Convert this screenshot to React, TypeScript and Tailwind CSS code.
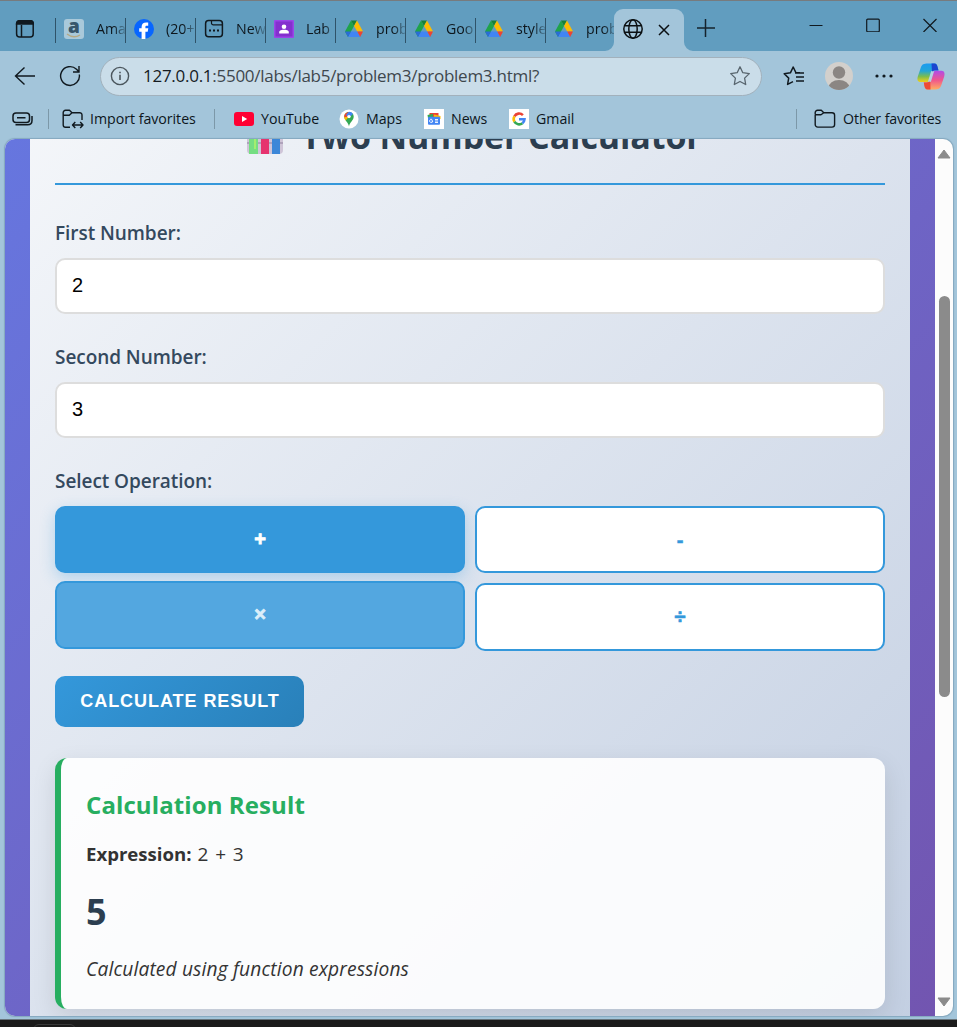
import React from "react";

const Drive = () => (
  <svg width="20" height="18" viewBox="0 0 20 18">
    <path d="M7 0.5 L1 11.5 L4 17 L10 6Z" fill="#1fa34a" />
    <path d="M7 0.5H13L10 6Z" fill="#188038" />
    <path d="M13 0.5 L19 11.5 H13.2 L10 6Z" fill="#fbbc04" />
    <path d="M4 17 L7 11.5H13.2L16.2 17Z" fill="#4285f4" />
    <path d="M1 11.5H7L4 17Z" fill="#2a6bd8" />
    <path d="M19 11.5H13.2L16.2 17Z" fill="#ea4335" />
  </svg>
);

const Amazon = () => (
  <svg width="20" height="20" viewBox="0 0 20 20">
    <rect width="20" height="20" rx="3" fill="#a9c9da" />
    <text x="10" y="14" textAnchor="middle" fontSize="19" fontWeight="800" fill="#37566b" fontFamily="Open Sans, sans-serif">a</text>
    <path d="M3 15 Q9.5 20 16 16" fill="none" stroke="#b6a983" strokeWidth="1.4" />
  </svg>
);

const Facebook = () => (
  <svg width="20" height="20" viewBox="0 0 20 20">
    <circle cx="10" cy="10" r="10" fill="#0866ff" />
    <path d="M7.6 20V12.7H5.2V9.3H7.6V8C7.6 4.8 9.4 3.4 12.2 3.4C13 3.4 13.8 3.5 14.2 3.6V6.7H12.8C11.7 6.7 11.4 7.2 11.4 8.1V9.3H14.3L13.7 12.7H11.4V20Z" fill="#fff" />
  </svg>
);

const NewTab = () => (
  <svg width="20" height="20" viewBox="0 0 20 20" fill="none" stroke="#10191f" strokeWidth="1.5">
    <rect x="1.6" y="1.6" width="16.8" height="16.2" rx="3" />
    <path d="M7.5 2V4A1.6 1.6 0 0 0 9 5.8H18" strokeWidth="1.2" />
    <path d="M5 11.5H7M9 11.5H11M13 11.5H15" strokeWidth="2" />
  </svg>
);

const Classroom = () => (
  <svg width="20" height="18" viewBox="0 0 20 18">
    <rect width="20" height="18" rx="1" fill="#9b45e8" />
    <rect x="1.5" y="1.5" width="17" height="15" fill="#8430ce" />
    <circle cx="10" cy="6.7" r="2.3" fill="#fff" />
    <path d="M5.2 13.5V12C5.2 10.4 8 9.8 10 9.8S14.8 10.4 14.8 12V13.5Z" fill="#fff" />
  </svg>
);

const tabs = [
  { icon: <Amazon />, title: "Ama" },
  { icon: <Facebook />, title: "(20+" },
  { icon: <NewTab />, title: "New" },
  { icon: <Classroom />, title: "Lab" },
  { icon: <Drive />, title: "prob" },
  { icon: <Drive />, title: "Goo" },
  { icon: <Drive />, title: "style" },
  { icon: <Drive />, title: "prob" },
];

function TabStrip() {
  return (
    <div className="flex h-[51px] border-t border-[#777b7e] bg-[#619dbf]">
      <div className="flex w-[55px] shrink-0 pt-[18px] pl-[15px]">
        <svg width="20" height="20" viewBox="0 0 20 20" fill="none" stroke="#10191f" strokeWidth="1.5">
          <rect x="1.6" y="1.8" width="16.6" height="16.2" rx="3" />
          <path d="M1.6 5V4.5A2.5 2.5 0 0 1 4.2 1.8H15.6A2.5 2.5 0 0 1 18.2 4.5V5H1.6Z" fill="#10191f" />
          <path d="M6.5 6V18" />
        </svg>
      </div>
      {tabs.map((t, i) => (
        <div key={i} className="flex w-[70px] shrink-0 pt-[17px]">
          <div className="h-[25px] w-px shrink-0 bg-[#2f5369]" />
          <div className="ml-2 flex h-[22px] w-5 shrink-0 items-center justify-center">{t.icon}</div>
          <div className="ml-[12px] h-6 w-[29px] overflow-hidden bg-linear-to-r from-[#0d161c] from-60% to-[#0d161c]/20 bg-clip-text text-[14.2px] leading-[22px] whitespace-nowrap text-transparent">
            {t.title}
          </div>
        </div>
      ))}
      <div className="relative -ml-px mt-2 flex h-[42px] w-[70px] shrink-0 items-center rounded-t-[9px] bg-[#a3c5da]">
        <svg className="absolute bottom-0 -left-[9px]" width="9" height="9"><path d="M9 0A9 9 0 0 1 0 9H9Z" fill="#a3c5da" /></svg>
        <svg className="absolute -right-[9px] bottom-0" width="9" height="9"><path d="M0 0A9 9 0 0 0 9 9H0Z" fill="#a3c5da" /></svg>
        <svg className="ml-2 -mt-0.5" width="22" height="22" viewBox="0 0 22 22" fill="none" stroke="#0b1013" strokeWidth="1.5">
          <circle cx="11" cy="11" r="9.2" />
          <ellipse cx="11" cy="11" rx="4.2" ry="9.2" />
          <path d="M2.6 7.7H19.4M2.6 14.3H19.4" />
        </svg>
        <svg className="ml-[14px]" width="12" height="12" viewBox="0 0 12 12" stroke="#0b1013" strokeWidth="1.5"><path d="M1 1L11 11M11 1L1 11" /></svg>
      </div>
      <svg className="mt-[18px] ml-[13px] shrink-0" width="18" height="18" viewBox="0 0 18 18" stroke="#15232c" strokeWidth="1.5"><path d="M8.5 0V18M0 9H18" /></svg>
      <div className="ml-auto flex shrink-0 gap-[43px] pt-[17px] pr-[20.5px]">
        <svg width="14" height="14" viewBox="0 0 14 14" stroke="#10191f"><path d="M.5 7.5H13.5" /></svg>
        <svg width="14" height="14" viewBox="0 0 14 14" fill="none" stroke="#10191f" strokeWidth="1.2"><rect x=".7" y="1.2" width="12.6" height="12.6" rx="1" /></svg>
        <svg width="14" height="14" viewBox="0 0 14 14" stroke="#10191f" strokeWidth="1.2"><path d="M.5 1L13.5 14M13.5 1L.5 14" /></svg>
      </div>
    </div>
  );
}

const star = "M11 1.8L13.8 7.7L20.3 8.6L15.6 13.1L16.7 19.5L11 16.5L5.3 19.5L6.4 13.1L1.7 8.6L8.2 7.7Z";

function AddressBar() {
  return (
    <div className="flex h-[50px] items-center">
      <svg className="ml-[14px] shrink-0" width="22" height="20" viewBox="0 0 22 20" fill="none" stroke="#10191f" strokeWidth="1.4"><path d="M21 10H1.5M10.5 1.5L1.5 10L10.5 18.5" /></svg>
      <svg className="ml-[23px] shrink-0" width="22" height="22" viewBox="0 0 22 22" fill="none" stroke="#10191f" strokeWidth="1.4"><path d="M20.3 9.5A9.4 9.4 0 1 1 17.5 4.2L20 6.8M20 1V7H14" /></svg>
      <div className="ml-[19px] flex h-[39px] w-[662px] shrink-0 items-center rounded-full border border-[#a2b1bc] bg-[#cadde9]">
        <svg className="ml-[9px] shrink-0" width="20" height="20" viewBox="0 0 20 20" fill="none" stroke="#4b565d" strokeWidth="1.4"><circle cx="10" cy="10" r="8.6" /><path d="M10 8.7V14M10 5.7V7.2" strokeWidth="1.6" /></svg>
        <div className="ml-[13px] text-[17px] tracking-[-0.27px] whitespace-nowrap text-[#3e474d]"><span className="text-[#151b1f]">127.0.0.1</span>:5500/labs/lab5/problem3/problem3.html?</div>
        <svg className="mr-[10px] ml-auto shrink-0" width="22" height="22" viewBox="0 0 22 22" fill="none" stroke="#58656e" strokeWidth="1.3" strokeLinejoin="round"><path d={star} /></svg>
      </div>
      <svg className="ml-[21px] shrink-0" width="22" height="22" viewBox="0 0 22 22" fill="none" stroke="#10191f" strokeWidth="1.5" strokeLinejoin="round"><path d="M17 7.8H13L10.2 2L7.4 7.8L1.2 8.8L5.7 13.1L4.6 19.4L10 16.7M12 8H21M13 12H21M13 16H21" /></svg>
      <svg className="ml-[20px] shrink-0" width="28" height="28" viewBox="0 0 28 28">
        <clipPath id="av"><circle cx="14" cy="14" r="14" /></clipPath>
        <g clipPath="url(#av)"><rect width="28" height="28" fill="#d3d0cc" /><circle cx="14" cy="10.5" r="6.2" fill="#8b8683" /><ellipse cx="14" cy="26" rx="10.5" ry="8" fill="#8b8683" /></g>
      </svg>
      <svg className="ml-[22px] shrink-0" width="18" height="4" viewBox="0 0 18 4" fill="#10191f"><circle cx="2" cy="2" r="1.6" /><circle cx="9" cy="2" r="1.6" /><circle cx="16" cy="2" r="1.6" /></svg>
      <svg className="ml-[24px] shrink-0" width="28" height="27" viewBox="0 0 28 27">
        <defs>
          <linearGradient id="c1" x1="0" y1="0" x2="0" y2="1"><stop offset="0" stopColor="#1c9bf0" /><stop offset=".4" stopColor="#22a6d8" /><stop offset=".7" stopColor="#7dbd4e" /><stop offset="1" stopColor="#f6d016" /></linearGradient>
          <linearGradient id="c2" x1="0" y1="0" x2="0" y2="1"><stop offset="0" stopColor="#b14be8" /><stop offset=".5" stopColor="#f0568c" /><stop offset="1" stopColor="#ffae62" /></linearGradient>
        </defs>
        <path d="M11 0.5H17.5C19.5 .5 20 2 20.6 4L21.5 7.5H18C15 7.5 14.5 9 13.8 11.5L12 17C11.2 19 10 19.5 8 19H3.5C.5 19 0 16.5 .8 13.5L4 4C5 1.5 6.5 .5 11 .5Z" fill="url(#c1)" />
        <path d="M14.5 .5H17.5C19.5 .5 20 2 20.6 4L21.5 7.5H18C16.5 7.5 15.6 8 15 9Z" fill="#1d45cf" />
        <path d="M17 26.5H10.5C8.5 26.5 8 25 7.4 23L6.8 19.4H9.5C12.5 19.4 13.5 18 14.2 15.5L16 10C16.8 8 18 7.6 20 7.8H24.5C27.5 8 28 10.5 27.2 13.5L24 23C23 25.5 21.5 26.5 17 26.5Z" fill="url(#c2)" />
        <path d="M13.5 26.5H10.5C8.5 26.5 8 25 7.4 23L6.8 19.4H9.5C11.5 19.4 12.5 19 13.3 17.5Z" fill="#ee4b36" />
        <path d="M15.5 8.5L12.5 18.5" stroke="#b5d0e2" strokeWidth="2.8" />
      </svg>
    </div>
  );
}

const Folder = ({ arrows = false }: { arrows?: boolean }) => (
  <svg className="shrink-0" width="22" height="20" viewBox="0 0 22 20" fill="none" stroke="#10191f" strokeWidth="1.4" strokeLinejoin="round">
    {arrows ? (
      <>
        <path d="M8 18.2H3.5A2.3 2.3 0 0 1 1.2 16V3.6A2.3 2.3 0 0 1 3.5 1.3H7.5L10 3.7H17.5A2.3 2.3 0 0 1 20 6V11M1.5 6.3H7.3L10 3.7" />
        <path d="M11 16H20.5M13.3 13L10.5 16L13.3 19M18.2 13L21 16L18.2 19" />
      </>
    ) : (
      <path d="M1.2 5V3.6A2.3 2.3 0 0 1 3.5 1.3H7.3L9.8 3.7H18A2.6 2.6 0 0 1 20.6 6.3V15.5A2.6 2.6 0 0 1 18 18.1H3.8A2.6 2.6 0 0 1 1.2 15.5V5.8H7L9.8 3.7" />
    )}
  </svg>
);

function Favorites() {
  return (
    <div className="flex h-[38px] items-center pb-[3px] text-[14.2px] tracking-[-0.03px] whitespace-nowrap text-[#0d161c]">
      <svg className="ml-[12px] shrink-0" width="21" height="16" viewBox="0 0 21 16" fill="none" stroke="#10191f" strokeWidth="1.5"><rect x="1" y="2" width="16.5" height="9.5" rx="3" /><path d="M5 6.8H13.5M3.5 13.8H15.5Q20 13.8 20 9.5V5" /></svg>
      <div className="ml-[15px] h-5 w-px bg-[#7c98a8]" />
      <div className="ml-[13px]"><Folder arrows /></div>
      <div className="flex w-[130px] pl-[6px]"><span>Import favorites</span></div>
      <div className="h-5 w-px bg-[#7c98a8]" />
      <svg className="ml-[19px] shrink-0" width="20" height="14" viewBox="0 0 20 14"><rect width="20" height="14" rx="3" fill="#ff0033" /><path d="M8 4L13.2 7L8 10Z" fill="#fff" /></svg>
      <div className="flex w-[85px] pl-[7px]"><span>YouTube</span></div>
      <svg className="shrink-0" width="20" height="20" viewBox="0 0 20 20">
        <circle cx="10" cy="10" r="9.5" fill="#fff" />
        <path d="M10 17.5C9.5 13.5 5.3 11.5 5.3 7.6A4.7 4.7 0 0 1 14.7 7.6C14.7 11.5 10.5 13.5 10 17.5Z" fill="#34a853" />
        <path d="M5.3 7.6A4.7 4.7 0 0 1 6.5 4.4L10 7.6L6.7 11.6C5.9 10.5 5.3 9.2 5.3 7.6Z" fill="#fbbc04" />
        <path d="M6.2 4.8A4.7 4.7 0 0 1 10 2.9V7.6L5.3 8.3C5.2 7 5.4 5.8 6.2 4.8Z" fill="#ea4335" />
        <path d="M9.5 2.9A4.7 4.7 0 0 1 14 5L10 8.5L7 6Z" fill="#4285f4" />
        <circle cx="10" cy="7.6" r="1.7" fill="#fff" />
      </svg>
      <div className="flex w-[65px] pl-[7px]"><span>Maps</span></div>
      <svg className="shrink-0" width="20" height="20" viewBox="0 0 20 20">
        <rect width="20" height="20" fill="#fff" />
        <path d="M5.5 4H14.5V8H5.5Z" fill="#ea4335" /><path d="M3.5 6L9 4.8V9H4Z" fill="#34a853" /><path d="M10 5.5L16.5 7V10H10Z" fill="#fbbc04" />
        <rect x="4" y="7.8" width="12" height="8" rx="1" fill="#4285f4" />
        <path d="M9 11.8H7.5M8.8 12A1.6 1.6 0 1 1 8.2 10.6M11 10.5H14M11 12H14M11 13.5H14" stroke="#fff" strokeWidth=".9" fill="none" />
      </svg>
      <div className="flex w-[65px] pl-[7px]"><span>News</span></div>
      <svg className="shrink-0" width="20" height="20" viewBox="0 0 20 20" fill="none" strokeWidth="2.6">
        <rect width="20" height="20" fill="#fff" />
        <path d="M13.9 6.1A5.4 5.4 0 0 0 5.4 7.3" stroke="#ea4335" />
        <path d="M5.4 7.3A5.4 5.4 0 0 0 5.4 12.7" stroke="#fbbc05" />
        <path d="M5.4 12.7A5.4 5.4 0 0 0 13.4 14.2" stroke="#34a853" />
        <path d="M13.4 14.2A5.4 5.4 0 0 0 15.5 10.2H10" stroke="#4285f4" />
      </svg>
      <span className="ml-[7px]">Gmail</span>
      <div className="ml-auto h-5 w-px bg-[#7c98a8]" />
      <div className="ml-[17px]"><Folder /></div>
      <div className="flex w-[121px] pl-[7px]"><span className="tracking-[-0.1px]">Other favorites</span></div>
    </div>
  );
}

const label = "block h-[26px] text-[19px] leading-[26px] font-semibold tracking-[-0.06px] text-[#34495e]";
const input = "mt-[12px] block h-14 w-full rounded-[10px] border-2 border-[#dddddd] bg-white px-[15px] pb-[1px] text-[20px] text-black font-['Liberation_Sans',sans-serif]";
const op = "rounded-[10px] border-2 border-[#3498db] text-[20px] font-bold";

function Calculator() {
  return (
    <main className="-mt-[54px] h-[945px] w-[880px] shrink-0 bg-linear-135 from-[#f5f7fa] to-[#c3cfe2] px-[25px] pt-[24px]">
      <h1 className="flex h-[76px] justify-center border-b-2 border-[#3498db] pl-[9px] text-[34px] leading-[55px] font-bold text-[#2c3e50]">
        <svg className="mt-2 mr-[18px] shrink-0" width="36" height="37" viewBox="0 0 36 37">
          <rect y="1" width="36" height="36" rx="4" fill="#cfc5d8" />
          <path d="M0 26H36" stroke="#8f809f" />
          <rect x="2" y="4" width="9" height="34" fill="#75de82" /><rect x="7" y="4" width="2" height="28" fill="#a3ed70" />
          <rect x="14" y="4" width="8" height="34" fill="#e6336f" />
          <rect x="25" y="4" width="8" height="34" fill="#3c87d8" />
        </svg>
        <span className="tracking-[-0.1px] whitespace-nowrap">Two Number Calculator</span>
      </h1>
      <form className="pt-[35px]" onSubmit={(e) => e.preventDefault()}>
        <label className={label}>First Number:</label>
        <input className={input} defaultValue="2" />
        <label className={label + " mt-[30px]"}>Second Number:</label>
        <input className={input} defaultValue="3" />
        <label className={label + " mt-[30px]"}>Select Operation:</label>
        <div className="mt-[12px] grid grid-cols-2 grid-rows-[67px_68px] gap-[10px] font-['Liberation_Sans',sans-serif]">
          <button className={op + " bg-[#3498db] pb-[2px] text-white shadow-[0_5px_15px_rgba(52,152,219,0.3)] [-webkit-text-stroke:0.8px_white]"}>+</button>
          <button className={op + " bg-white text-[#3498db] [-webkit-text-stroke:0.5px_#3498db]"}>-</button>
          <button className={op + " -mt-[2px] mb-[2px] bg-[#53a7e0] pb-[2px] text-[#dceefa] [-webkit-text-stroke:0.8px_#dceefa]"}>×</button>
          <button className={op + " bg-white pb-[1px] text-[#3498db] [-webkit-text-stroke:0.7px_#3498db]"}>÷</button>
        </div>
        <button className="mt-[25px] block h-[51px] w-[249px] rounded-[10px] bg-linear-135 from-[#3498db] to-[#2980b9] pl-[1px] font-['Liberation_Sans',sans-serif] text-[18px] font-bold tracking-[0.95px] whitespace-nowrap text-white">CALCULATE RESULT</button>
      </form>
      <section className="mt-[31px] h-[251px] rounded-[12px] border-l-[6px] border-[#27ae60] bg-white/90 pt-[29px] pl-[25px] text-[#333333] shadow-[0_8px_25px_rgba(0,0,0,0.1)]">
        <h3 className="text-[24px] leading-[36px] font-bold tracking-[0.1px] text-[#27ae60]">Calculation Result</h3>
        <p className="mt-[16px] flex gap-[6px] text-[18.6px] leading-[30px]"><strong>Expression:</strong><span className="text-[19px] tracking-[0.9px]">2 + 3</span></p>
        <p className="mt-[18px] text-[36px] leading-[50px] font-bold text-[#2c3e50]">5</p>
        <p className="mt-[17px] text-[19.2px] leading-[30px] tracking-[0.14px] italic">Calculated using function expressions</p>
      </section>
    </main>
  );
}

export default function App() {
  return (
    <div className="flex h-[1027px] w-[957px] flex-col overflow-hidden bg-[#a3c5da] font-['Open_Sans','Noto_Sans',sans-serif]">
      <TabStrip />
      <AddressBar />
      <Favorites />
      <div className="ml-[5px] flex h-[877px] w-[948px] overflow-hidden rounded-[10px] bg-[#fcfcfc] shadow-[0_0_1px_1px_rgba(60,100,125,0.3)]">
        <div className="flex h-full w-[930px] bg-linear-135 from-[#6676df] to-[#7255b0] px-[25px]">
          <Calculator />
        </div>
        <div className="flex w-[18px] flex-col items-center">
          <svg className="mt-[10px] shrink-0" width="14" height="10"><path d="M7 1L13 9H1Z" fill="#8b8b8b" stroke="#8b8b8b" strokeLinejoin="round" /></svg>
          <div className="mt-[137px] h-[401px] w-[11px] shrink-0 rounded-full bg-[#8b8b8b]" />
          <svg className="mt-auto mb-[9px] shrink-0" width="14" height="10"><path d="M7 9L13 1H1Z" fill="#8b8b8b" stroke="#8b8b8b" strokeLinejoin="round" /></svg>
        </div>
      </div>
      <div className="mt-[3px] flex h-[8px] border-t border-[#68757c] bg-[#1b1b1b] pt-[4px] pl-[33px]">
        <div className="h-[10px] w-[43px] rounded-t-md border border-[#393939]" />
      </div>
    </div>
  );
}
